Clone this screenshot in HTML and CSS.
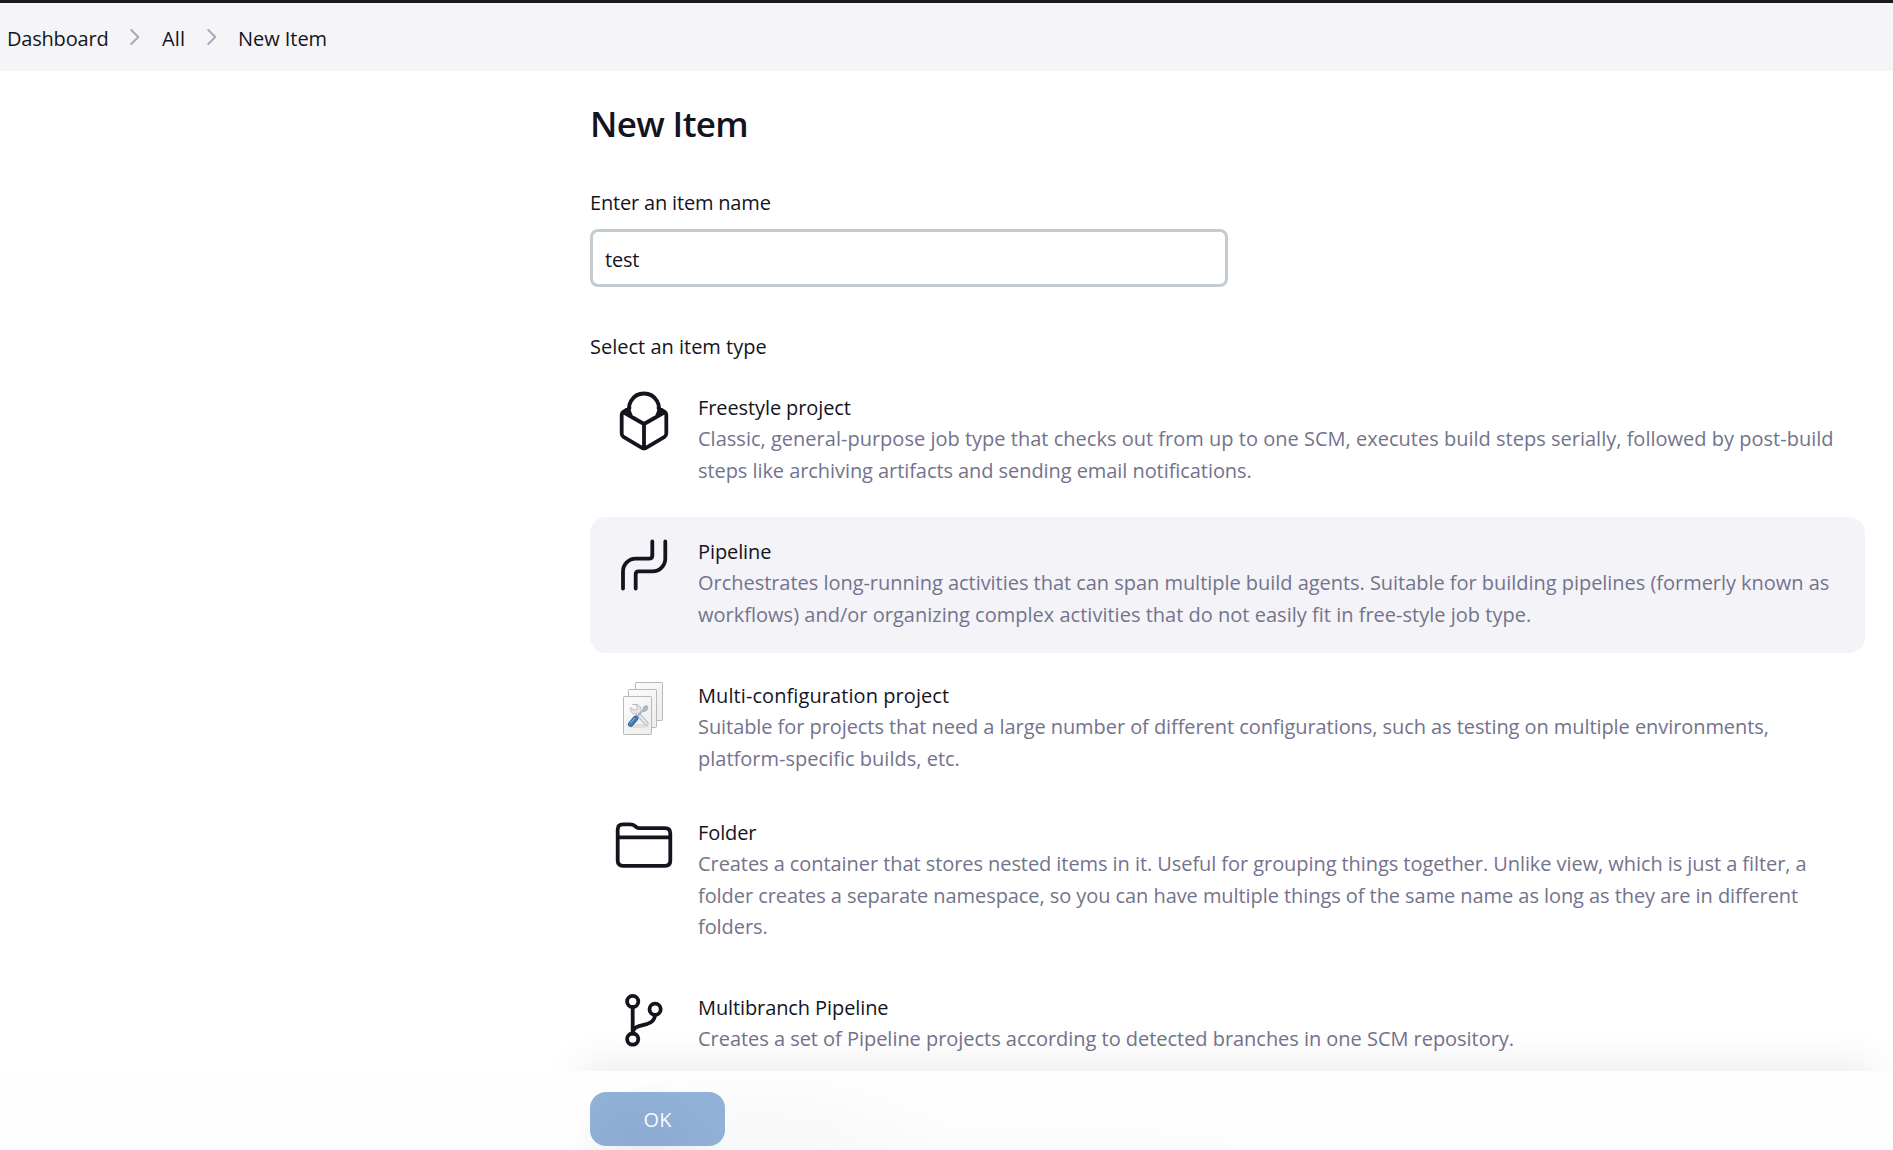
FILE: index.html
```html
<!DOCTYPE html>
<html lang="en">
<head>
<meta charset="utf-8">
<title>New Item</title>
<link rel="stylesheet" href="styles.css">
</head>
<body>
<nav class="breadcrumbs">
  <a class="crumb crumb-dashboard">Dashboard</a>
  <svg class="chevron" viewBox="0 0 10 18"><path d="M1.3 2l7 7-7 7"/></svg>
  <a class="crumb crumb-all">All</a>
  <svg class="chevron" viewBox="0 0 10 18"><path d="M1.3 2l7 7-7 7"/></svg>
  <a class="crumb">New Item</a>
</nav>
<main class="content">
  <h1 class="title">New Item</h1>
  <label class="label label-name" for="name">Enter an item name</label>
  <input class="name-input" id="name" type="text" value="test">
  <div class="label label-type">Select an item type</div>
  <ul class="items">
    <li class="item">
      <svg class="icon" viewBox="0 0 60 68">
        <path d="M17 31A15 15 0 1 1 43 31M30 39L9 27Q7.7 28 7.7 30V48.500Q7.700 50.700 9.500 51.800L28 62.800Q30 64 32 62.800L50.500 51.800Q52.300 50.700 52.300 48.500V30Q52.300 28 51 27L30 39V63M9 27L15.500 22.800M51 27L44.500 22.800M11 26L17 31M49 26L43 31"/>
      </svg>
      <div class="text">
        <h2 class="name">Freestyle project</h2>
        <p class="desc"><span class="wide">Classic, general-purpose job type that checks out from up to one SCM, executes build steps serially, followed by post-build</span><br>steps like archiving artifacts and sending email notifications.</p>
      </div>
    </li>
    <li class="item item-selected">
      <svg class="icon" viewBox="0 0 60 68">
        <path d="M38.300 12.500V26.500Q38.300 29.700 35 29.700H21.700A12.700 12.700 0 0 0 9 42.400V59.500M51.300 12.500V29.500A12.800 12.800 0 0 1 38.500 42.300H24.700Q21.700 42.300 21.700 45.300V59.500"/>
      </svg>
      <div class="text">
        <h2 class="name">Pipeline</h2>
        <p class="desc"><span class="medium">Orchestrates long-running activities that can span multiple build agents. Suitable for building pipelines (formerly known as</span><br><span class="wide">workflows) and/or organizing complex activities that do not easily fit in free-style job type.</span></p>
      </div>
    </li>
    <li class="item item-matrix">
      <svg class="icon icon-matrix" viewBox="0 0 60 68">
        <defs>
          <linearGradient id="page" x1="0" y1="0" x2="1" y2="1"><stop offset="0" stop-color="#fcfcfc"/><stop offset="1" stop-color="#ececeb"/></linearGradient>
        </defs>
        <g class="page">
          <rect x="21.500" y="9.500" width="27" height="38" rx=".8"/>
          <rect x="14.500" y="16.500" width="28" height="38" rx=".8"/>
          <rect x="9.500" y="23.500" width="28" height="38" rx=".8"/>
        </g>
        <ellipse class="tool-shadow" cx="24" cy="53" rx="11" ry="2"/>
        <path class="wrench-edge" d="M23.500 40.500L32.500 50.500"/>
        <path class="wrench-fill" d="M23.500 40.500L32.500 50.500"/>
        <path class="wrench-jaw" d="M19 31.500l3 .1 1.500 3-1.300 2.300-3.300-.2-2-2.300c-1.100 3 .6 6 3.600 6.600 3.700.8 6.800-1.700 6.400-4.900-.3-3.600-3.900-5.600-7.900-4.600z"/>
        <path class="shaft" d="M21.500 45.500L29.500 37M29 37.500l1-3.200 2.300-1.200 1.200 1.100-.8 2.500-2.800 1.400"/>
        <path class="handle-edge" d="M16.700 51.200L21.700 45.300"/>
        <path class="handle" d="M16.700 51.200L21.700 45.300"/>
        <path class="glint" d="M16.500 50L20.500 45.500"/>
      </svg>
      <div class="text">
        <h2 class="name name-wide">Multi-configuration project</h2>
        <p class="desc">Suitable for projects that need a large number of different configurations, such as testing on multiple environments,<br><span class="wide">platform-specific builds, etc.</span></p>
      </div>
    </li>
    <li class="item">
      <svg class="icon" viewBox="0 0 60 68">
        <path d="M3.700 50.500V19.500Q3.700 14.300 9 14.300H16Q19 14.300 21 16L22.500 17.200Q23.700 18.200 25.500 18.200H51Q56.300 18.200 56.300 23.500V50.500Q56.300 55.800 51 55.800H9Q3.700 55.800 3.700 50.500zM3.700 27.400H56.300"/>
      </svg>
      <div class="text">
        <h2 class="name">Folder</h2>
        <p class="desc">Creates a container that stores nested items in it. Useful for grouping things together. Unlike view, which is just a filter, a<br>folder creates a separate namespace, so you can have multiple things of the same name as long as they are in different<br>folders.</p>
      </div>
    </li>
    <li class="item">
      <svg class="icon" viewBox="0 0 60 68">
        <circle cx="18.700" cy="16.500" r="5.600"/><circle cx="41.100" cy="24.200" r="5.600"/><circle cx="18.700" cy="54.100" r="5.600"/>
        <path d="M18.700 22V48.500M41 30Q40.700 36.500 33.500 38.800L25 41.100Q19.500 42.700 18.700 47.500"/>
      </svg>
      <div class="text">
        <h2 class="name">Multibranch Pipeline</h2>
        <p class="desc"><span class="medium">Creates a set of Pipeline projects according to detected branches in one SCM repository.</span></p>
      </div>
    </li>
  </ul>
</main>
<footer class="footer">
  <div class="shade"></div>
  <button class="ok" type="button">OK</button>
</footer>
</body>
</html>
```
FILE: styles.css
```css
* { box-sizing: border-box; }

body {
  margin: 0;
  height: 1150px;
  overflow: hidden;
  background: #fff;
  color: #14141f;
  font: 20px/31.5px "Open Sans", "Noto Sans", sans-serif;
}

.breadcrumbs {
  display: flex;
  align-items: center;
  height: 71px;
  padding: 3px 0 0 7px;
  border-top: 3px solid #1b1a1c;
  background: #f5f5f8;
}
.crumb { letter-spacing: -.05px; }
.crumb-dashboard { width: 101px; letter-spacing: -.2px; }
.crumb-all { width: 24px; padding-left: 1px; letter-spacing: .2px; }
.chevron {
  width: 10px;
  height: 18px;
  margin: 0 21px 3px 22px;
  fill: none;
  stroke: #a9a9bb;
  stroke-width: 2;
  stroke-linecap: round;
  stroke-linejoin: round;
}

.content { padding: 29px 28px 0 590px; }
.title {
  margin: 0;
  font-size: 35px;
  line-height: 48px;
  font-weight: 600;
  letter-spacing: -.65px;
}
.label { display: block; letter-spacing: -.18px; }
.label-name { margin-top: 38.500px; }
.label-type { margin-top: 43.500px; letter-spacing: 0; }
.name-input {
  display: block;
  width: 638px;
  height: 58px;
  margin-top: 11px;
  padding: 3px 12px 0;
  border: 3px solid #c3ccd1;
  border-radius: 8px;
  outline: none;
  background: #fff;
  color: inherit;
  font: inherit;
  letter-spacing: -.2px;
}

.items {
  display: flex;
  flex-direction: column;
  gap: 8.400px;
  margin: 11.400px 0 0;
  padding: 0;
  list-style: none;
}
.item {
  display: flex;
  gap: 24px;
  padding: 18.500px 0 22.500px 24px;
  border-radius: 16px;
}
.item-selected { background: #f3f3f8; }
.item-matrix { padding-bottom: 15.500px; }
.text { flex: 1; white-space: nowrap; }
.name { margin: 0; font: inherit; letter-spacing: -.1px; }
.name-wide { letter-spacing: .08px; }
.desc { margin: 0; color: #73738c; letter-spacing: -.068px; }
.wide { letter-spacing: .012px; }
.medium { letter-spacing: -.035px; }

.icon {
  flex: none;
  width: 60px;
  height: 68px;
  margin: -6.500px 0 -10px;
  fill: none;
  stroke: #14141f;
  stroke-width: 3.800;
  stroke-linecap: round;
  stroke-linejoin: round;
}
.page { fill: url(#page); stroke: #b9b9b7; stroke-width: 1; }
.tool-shadow { fill: #000; fill-opacity: .07; stroke: none; }
.wrench-edge { stroke: #b5b6b5; stroke-width: 4.200; }
.wrench-fill { stroke: #e6e7e6; stroke-width: 2.600; }
.wrench-jaw { fill: #e4e5e4; stroke: #b2b3b2; stroke-width: .8; }
.shaft { fill: #b6c3d3; stroke: #a3b2c5; stroke-width: 1.800; }
.handle-edge { stroke: #2f5f9f; stroke-width: 5.400; }
.handle { stroke: #4579b8; stroke-width: 3.800; }
.glint { stroke: #a7c2e2; stroke-width: 1; }

.footer {
  position: fixed;
  inset: 1071px 0 0;
  padding: 21px 0 0 590px;
  background:
    radial-gradient(ellipse 80px 70px at 645px 79px, rgba(0, 0, 0, .06), transparent),
    radial-gradient(ellipse 200px 60px at 760px 56px, rgba(0, 0, 0, .022), transparent),
    radial-gradient(ellipse 480px 40px at 1000px 79px, rgba(0, 0, 0, .01), transparent),
    #fefefe;
}
.shade {
  position: absolute;
  inset: -60px 0 auto;
  height: 60px;
  overflow: hidden;
}
.shade::before {
  content: "";
  position: absolute;
  top: 60px;
  left: 590px;
  right: 28px;
  height: 100px;
  box-shadow: 0 0 40px 8px rgba(0, 0, 0, .078);
}
.ok {
  display: block;
  width: 135px;
  height: 54px;
  padding: 2px 0 0;
  border: 0;
  border-radius: 16px;
  background: radial-gradient(ellipse 80px 65px at 55px 54px, #8aaad1, #92b1d7);
  color: #f7f9fc;
  font: inherit;
}
```
